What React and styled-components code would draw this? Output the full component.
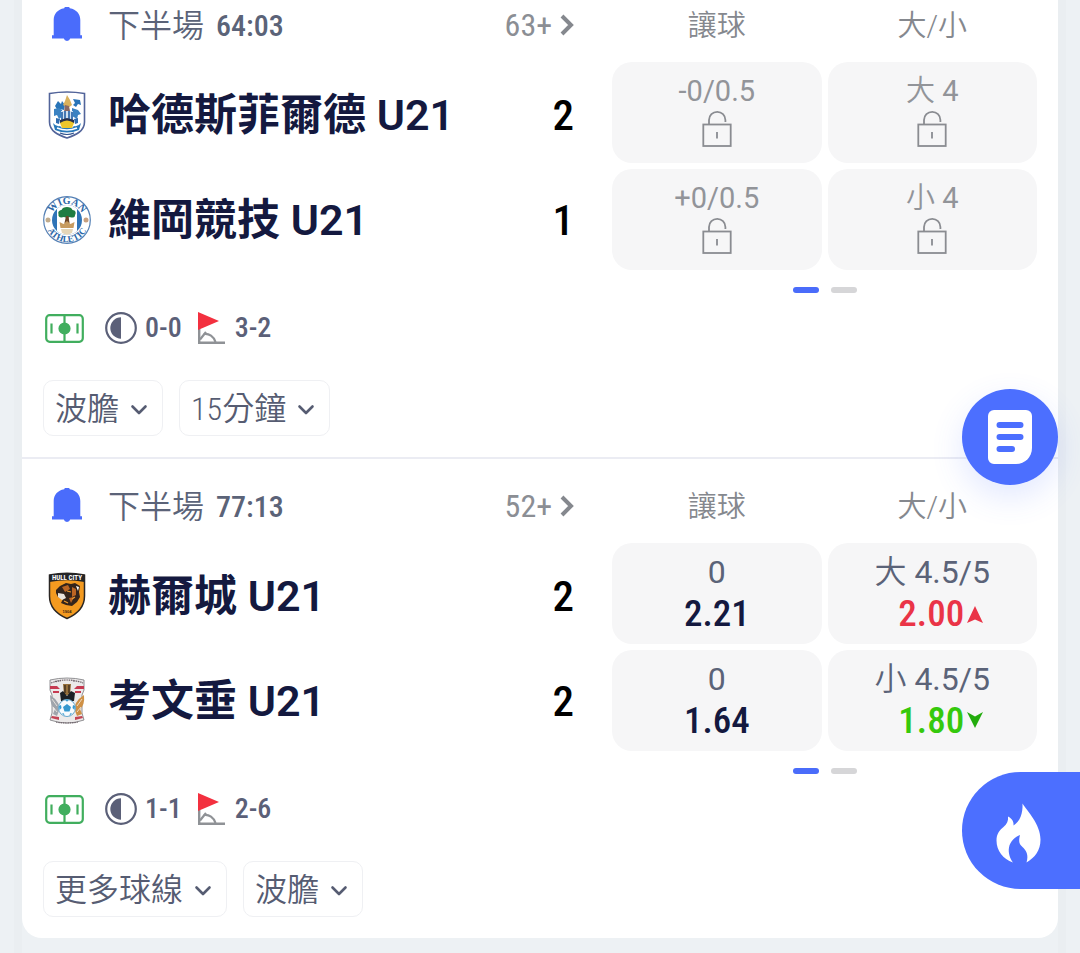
import React from "react";
import styled, { createGlobalStyle } from "styled-components";

const sans = `Roboto, "Noto Sans CJK TC", sans-serif`;
const narrow = `"Roboto Condensed", "Liberation Sans Narrow", Roboto, "Noto Sans CJK TC", sans-serif`;

const GlobalStyle = createGlobalStyle`
  *, *::before, *::after { box-sizing: border-box; }
  body { margin: 0; background: #edf1f4; font-family: ${sans}; color: #14193f; }
  button { font: inherit; color: inherit; border: 0; padding: 0; background: none; cursor: pointer; }
  svg { display: block; flex: none; }
`;

const Page = styled.main`
  padding: 0 14px;
`;

const Panel = styled.section`
  border: solid #eaeef1;
  border-width: 0 8px;
  padding-bottom: 16px;
`;

const Card = styled.div`
  background: #fff;
  border-radius: 0 0 20px 20px;
`;

const Match = styled.article`
  padding: 0 21px 21px;
  & + & { border-top: 2px solid #ebecf3; padding-top: 22px; }
`;

const Board = styled.div`
  display: grid;
  grid-template-columns: 5fr 4fr;
  column-gap: 38px;
`;

const HeadRow = styled.div`
  display: flex;
  align-items: center;
  height: 50px;
  margin-bottom: 12px;
  line-height: 40px;
`;

const IconCell = styled.span`
  display: flex;
  justify-content: center;
  width: 48px;
  margin-right: 17px;
`;

const BellButton = styled.button`
  display: flex;
  justify-content: center;
  width: 48px;
  margin-right: 17px;
`;

const Period = styled.span`
  padding-top: 2px;
  font-size: 32px;
  font-weight: 350;
  color: #5b6378;
`;

const Clock = styled.time`
  margin-left: 12px;
  padding-top: 2px;
  font: 500 30px/40px ${narrow};
  color: #5b6378;
`;

const MoreLink = styled.a`
  display: flex;
  align-items: center;
  gap: 8px;
  margin-left: auto;
  font: 400 32px/40px ${narrow};
  color: #8b8e94;
  text-decoration: none;
`;

const Teams = styled.div`
  display: grid;
  grid-auto-rows: 105px;
`;

const Team = styled.div`
  display: flex;
  align-items: center;
`;

const TeamName = styled.h2`
  margin: 0;
  font-size: 43px;
  line-height: 48px;
  font-weight: 600;
  white-space: nowrap;
`;

const Score = styled.strong`
  margin-left: auto;
  font: 500 43px/48px ${narrow};
  color: #000;
`;

const MarketHead = styled(HeadRow)`
  display: grid;
  grid-template-columns: 1fr 1fr;
  gap: 6px;
  padding-top: 2px;
  text-align: center;
  font-size: 29px;
  font-weight: 350;
  color: #85888e;
`;

const OddsGrid = styled.div`
  display: grid;
  grid-template-columns: 1fr 1fr;
  grid-auto-rows: 101px;
  gap: 6px;
`;

const OddsButton = styled.button`
  && { padding-top: 11px; background: #f6f6f7; }
  display: flex;
  flex-direction: column;
  align-items: center;
  justify-content: flex-start;
  border-radius: 20px;
`;

const Line = styled.span`
  font-size: ${(p) => (p.$locked ? "29px" : "32px")};
  line-height: 36px;
  font-weight: 400;
  color: ${(p) => (p.$locked ? "#929499" : "#5b6378")};
`;

const Side = styled.span`
  font-weight: 350;
`;

const priceColors = { up: "#ea3447", down: "#35c90c" };

const Price = styled.span`
  display: flex;
  align-items: center;
  gap: 2px;
  padding-left: ${(p) => (p.$trend ? "18px" : "0")};
  font: 500 37px/48px ${narrow};
  color: ${(p) => priceColors[p.$trend] || "#14193f"};
`;

const Pager = styled.div`
  display: flex;
  justify-content: center;
  gap: 12px;
  margin-top: 17px;
`;

const PagerDot = styled.button`
  && { background: ${(p) => (p.$active ? "#4a6cfa" : "#d6d6d8")}; }
  width: 26px;
  height: 6px;
  border-radius: 3px;
`;

const Stats = styled.div`
  display: flex;
  align-items: center;
  height: 36px;
  margin-top: 17px;
  padding-left: 2px;
`;

const Stat = styled.span`
  display: flex;
  align-items: center;
  gap: ${(p) => p.$gap}px;
  margin-left: ${(p) => p.$space}px;
  font: 500 28px/36px ${narrow};
  color: #5b6078;
`;

const Chips = styled.div`
  display: flex;
  gap: 16px;
  margin-top: 34px;
`;

const Chip = styled.button`
  && {
    border: 1px solid #eff0f3;
    padding: 2px 14px 0 11px;
    font: 350 32px/50px ${narrow};
    color: #565c72;
  }
  display: flex;
  align-items: center;
  gap: 11px;
  height: 56px;
  border-radius: 10px;
`;

const SlipButton = styled.button`
  position: fixed;
  right: 22px;
  top: 389px;
  display: grid;
  place-items: center;
  width: 96px;
  height: 96px;
  border-radius: 50%;
  && { background: #4c6fff; }
  box-shadow: 0 12px 32px rgba(76, 111, 255, 0.16);
`;

const HotButton = styled.button`
  position: fixed;
  right: 0;
  top: 772px;
  display: flex;
  align-items: center;
  width: 118px;
  height: 117px;
  && { padding: 4px 0 0 34px; background: #4c6fff; }
  border-radius: 59px 0 0 59px;
`;

const BellIcon = () => (
  <svg width="32" height="36" viewBox="0 0 32 36" fill="#4a6cfb" aria-hidden="true">
    <path d="M13.2 1.200a3 3 0 0 1 5.600 0C25.500 2.400 29.300 7 29.300 13v15.200H31v3.400H19.200a3.300 3.300 0 0 1-6.400 0H1v-3.400h1.700V13C2.700 7 6.500 2.400 13.200 1.200Z" />
  </svg>
);

const ChevronRight = () => (
  <svg width="14" height="22" viewBox="0 0 14 22" fill="none" stroke="#85888e" strokeWidth="4" aria-hidden="true">
    <path d="M2 2l9 9-9 9" />
  </svg>
);

const ChevronDown = () => (
  <svg width="18" height="12" viewBox="0 0 18 12" fill="none" stroke="#565c72" strokeWidth="2.600" strokeLinecap="round" strokeLinejoin="round" aria-hidden="true">
    <path d="M2.500 3.500L9 10l6.500-6.500" />
  </svg>
);

const LockIcon = () => (
  <svg width="30" height="38" viewBox="0 0 30 38" fill="none" stroke="#8a8c91" strokeWidth="1.800" role="img" aria-label="鎖定">
    <rect x="1.300" y="15.500" width="27.400" height="21.500" />
    <path d="M7 15.500V11a8.200 8.200 0 0 1 16.400 0v2" />
    <path d="M15 23v6.500" />
  </svg>
);

const TrendIcon = ({ trend }) => (
  <svg width="18" height="18" viewBox="0 0 18 18" aria-hidden="true">
    {trend === "up" ? (
      <path d="M9 1L17 18 9 14.500 1 18Z" fill="#ea3447" />
    ) : (
      <path d="M9 16L17 0 9 4.500 1 0Z" fill="#22ab0c" />
    )}
  </svg>
);

const PitchIcon = () => (
  <svg width="39" height="29" viewBox="0 0 39 29" fill="none" stroke="#41ae5e" strokeWidth="2.200" role="img" aria-label="球場">
    <rect x="1.200" y="1.200" width="36.600" height="26.600" rx="3.500" />
    <path d="M19.500 1v27M6.500 9.500v10M32.500 9.500v10" />
    <circle cx="19.500" cy="14.500" r="5" fill="#41ae5e" />
  </svg>
);

const HalfIcon = () => (
  <svg width="32" height="32" viewBox="0 0 32 32" role="img" aria-label="半場">
    <circle cx="16" cy="16" r="14.800" fill="none" stroke="#5b6078" strokeWidth="2.200" />
    <path d="M16 5.300a10.700 10.700 0 0 0 0 21.400Z" fill="#5b6078" />
  </svg>
);

const CornerIcon = () => (
  <svg width="27" height="32" viewBox="0 0 27 32" role="img" aria-label="角球">
    <path d="M1.200 17v13.700H27" fill="none" stroke="#8f9296" strokeWidth="2.400" />
    <path d="M2 27.500l6-7.500M5.500 22C11 21 16 24.500 17.500 30" fill="none" stroke="#8f9296" strokeWidth="2.200" />
    <path d="M0 0l21 9-21 9Z" fill="#f3303f" />
  </svg>
);

const SlipIcon = () => (
  <svg width="44" height="54" viewBox="0 0 44 54" aria-hidden="true">
    <path d="M6 0h32a6 6 0 0 1 6 6v32c0 9-7 16-16 16H6a6 6 0 0 1-6-6V6a6 6 0 0 1 6-6Z" fill="#fff" />
    <path d="M11.500 15h21M11.500 27h21M11.500 39h12.500" stroke="#4c6fff" strokeWidth="6" strokeLinecap="round" />
  </svg>
);

const FlameIcon = () => (
  <svg width="46" height="60" viewBox="0 0 46 60" aria-hidden="true">
    <path fill="#fff" d="M26.500 0.500C31 8 44.500 21 44.500 36.500c0 11-5.500 18-14 23 2.500-8-.5-12-4-15.500C23 41 22.500 38 24 32c-4.500 1.500-10 6.500-11 12.500C12 50 14 55.500 17 59.500 7 56 .5 47.500 .5 37.500.5 31 3.500 27 7.500 24c3.500-3 5-6 4.500-10.500 4 2 6 5 5.500 9 6.500-4 9.500-12 9-22Z" />
  </svg>
);

const HuddersfieldCrest = () => (
  <svg width="48" height="48" viewBox="0 0 48 48" role="img" aria-label="哈德斯菲爾德">
    <path d="M6.500 2.500Q24-.5 41.500 2.500V31C41.500 40 33 44 24 47 15 44 6.500 40 6.500 31Z" fill="#fff" stroke="#52649a" strokeWidth="1.600" />
    <path d="M12 15l3-5 3 3 1-3 3 4-1 5-4-1-2 2zM30 8l7 1 1 5-3-1-2 3-3-2 2-2z" fill="#2874b8" />
    <path d="M11 18l5-1 3 2 1 6-4 3-2-4-3 1zM29 17l6 2 3 4-3 1-1 4-5-3z" fill="#3a82c2" />
    <path d="M13 27l4 1-1 5-3-1zM31 28l4-1v5l-3 1z" fill="#2f6cb0" />
    <path d="M22 10l2-6 3 5 2 5-4 3-5-3z" fill="#d9b15c" />
    <path d="M22 14l4 1 1 5-6 1z" fill="#8a6963" />
    <path d="M18 20h12v11H18z" fill="#cfe0ef" />
    <path d="M19 21v10M22 20v11M26 20v11M29 21v10" stroke="#225fa6" strokeWidth="1.600" />
    <path d="M17 29l7-2 7 2v3H17z" fill="#28304b" />
    <path d="M17 32q7-5 14 0l-2 5H19z" fill="#edc62c" />
    <path d="M10 32q3 4 7 3l2 2h10l2-2q4 1 7-3l-2 7q-12 5-24 0z" fill="#2878b9" />
    <path d="M14 37q10 4 20 0" fill="none" stroke="#fff" strokeWidth="1.400" />
    <path d="M17 42q7 3 14 0" fill="none" stroke="#2c4f8b" strokeWidth="1.200" />
  </svg>
);

const WiganCrest = () => (
  <svg width="48" height="48" viewBox="0 0 48 48" role="img" aria-label="維岡競技">
    <defs>
      <path id="wigan-top" d="M8 24a16 16 0 0 1 32 0" />
      <path id="wigan-bottom" d="M2 24a22 22 0 0 0 44 0" />
      <clipPath id="wigan-disc"><circle cx="24" cy="24" r="15" /></clipPath>
    </defs>
    <circle cx="24" cy="24" r="23.300" fill="#fff" stroke="#5480b5" strokeWidth="1.200" />
    <g clipPath="url(#wigan-disc)">
      <path d="M8 8h32v32H8z" fill="#2f74b8" />
      <path d="M14 8h20v32H14z" fill="#fff" />
    </g>
    <path d="M15.500 18c-1-3 2-4 3-4 1-4 10-4 11 0 3 0 4 3 2.500 5 .5 3-4 3-5 2-2 1-4 1-6 0-4 1-6 0-5.500-3z" fill="#1f7d43" />
    <path d="M23 20h2.500l1 7h-5z" fill="#6d4527" />
    <path d="M16.500 26l4 2 3.500-3 3.500 3 4-2-1 6H17.500z" fill="#c79b60" />
    <path d="M18 33h12l-1 4-5 2-5-2z" fill="#e5d6b8" />
    <circle cx="5" cy="24" r="2.500" fill="#c0ab8c" />
    <circle cx="43" cy="24" r="2.500" fill="#c7a080" />
    <g fill="#2b66a8" fontFamily="Liberation Serif, serif" fontWeight="700" fontSize="10" textAnchor="middle">
      <text><textPath href="#wigan-top" startOffset="50%">WIGAN</textPath></text>
      <text fontSize="9"><textPath href="#wigan-bottom" startOffset="50%">ATHLETIC</textPath></text>
    </g>
  </svg>
);

const HullCrest = () => (
  <svg width="48" height="48" viewBox="0 0 48 48" role="img" aria-label="赫爾城">
    <path d="M6.500 3Q24-.5 41.500 3V24c0 11-7 18-17.500 22.500C13.500 42 6.500 35 6.500 24Z" fill="#f39a20" stroke="#2b2724" strokeWidth="1.500" />
    <path d="M6.500 3Q24-.5 41.500 3v7Q24 6.500 6.500 10Z" fill="#232528" />
    <text x="24" y="7.500" fill="#fff" fontFamily="Roboto Condensed, sans-serif" fontWeight="700" fontSize="7" textAnchor="middle">HULL CITY</text>
    <path d="M13 18l4-4 6-3 5 1 4-1 5 3-1 6 1 5-3 5-5 4-6-1-5-2 2-4-5-2-2-4z" fill="#33241b" />
    <path d="M19 15l6-2 2 4-5 3zM29 15l4 2v6l-4 2zM26 26l5-1-3 6z" fill="#ba6524" />
    <path d="M15 21l6 1 2 4-4 2-4-3z" fill="#e9e4dc" />
    <path d="M33 14l3 1-1 4z" fill="#fff" />
    <path d="M24 19l4 1M29 27l3-2M21 29l4 2" stroke="#ef9b2e" strokeWidth="1.200" />
    <text x="24" y="41" fill="#332517" fontFamily="Liberation Sans, sans-serif" fontWeight="700" fontSize="4" textAnchor="middle">1904</text>
  </svg>
);

const CoventryCrest = () => (
  <svg width="48" height="48" viewBox="0 0 48 48" role="img" aria-label="考文垂">
    <path d="M7 3Q24-1 41 3v10l-2 5v18l2 7Q24 49 7 43l2-7V18l-2-5Z" fill="#eceaea" stroke="#77777b" strokeWidth=".8" />
    <path d="M8 6q5-2 10-2M30 4q6 0 10 2M12 4.500q12-3 24 0M13 45q11 2 22 0" fill="none" stroke="#70646b" strokeWidth="1.200" strokeDasharray="1.500 .8" />
    <path d="M7 9h7l3 3H7zM41 9h-7l-3 3h10zM10 14h6v2h-6zM38 14h-6v2h6z" fill="#c63a51" />
    <path d="M20 7h8l-1 11h-6z" fill="#96703c" />
    <path d="M22 8v8M26 8v8" stroke="#33251c" strokeWidth="1.200" />
    <path d="M17 16l3-2 4 5 4-5 4 2-1 8H18z" fill="#1c2026" />
    <path d="M7 18q5 3 8 8l2 5-3 8-4-2 2-5q-5-4-5-14z" fill="#9fa4ab" />
    <path d="M41 18q-5 3-8 8l-2 5 3 8 5-2-2-5q5-4 4-14z" fill="#cf9146" />
    <path d="M9 22l5 7M10 30l4 5M39 22l-5 7M38 30l-4 5" stroke="#f4eee6" strokeWidth=".8" />
    <circle cx="24" cy="31" r="8.500" fill="#f7fbfe" stroke="#68a8cd" />
    <path d="M24 27l4 3-1.500 4.500h-5L20 30zM22 22.800h4l-2 2zM16 29l2-1 .5 3-2 2zM32 29l-2-1-.5 3 2 2zM19 36l2 .5.500 2.500zM29 36l-2 .5-.5 2.500z" fill="#3598cf" />
    <path d="M9 39l7 1v3l-8-2zM39 39l-7 1v3l8-2z" fill="#c34455" />
  </svg>
);

const matches = [
  {
    clock: "64:03",
    more: "63+",
    teams: [
      { name: "哈德斯菲爾德 U21", score: 2, Crest: HuddersfieldCrest },
      { name: "維岡競技 U21", score: 1, Crest: WiganCrest },
    ],
    odds: [{ line: "-0/0.5" }, { side: "大", line: "4" }, { line: "+0/0.5" }, { side: "小", line: "4" }],
    half: "0-0",
    corners: "3-2",
    chips: ["波膽", "15分鐘"],
  },
  {
    clock: "77:13",
    more: "52+",
    teams: [
      { name: "赫爾城 U21", score: 2, Crest: HullCrest },
      { name: "考文垂 U21", score: 2, Crest: CoventryCrest },
    ],
    odds: [
      { line: "0", price: "2.21" },
      { side: "大", line: "4.5/5", price: "2.00", trend: "up" },
      { line: "0", price: "1.64" },
      { side: "小", line: "4.5/5", price: "1.80", trend: "down" },
    ],
    half: "1-1",
    corners: "2-6",
    chips: ["更多球線", "波膽"],
  },
];

function Odds({ side, line, price, trend }) {
  return (
    <OddsButton type="button" disabled={!price}>
      <Line $locked={!price}>
        {side && <Side>{side} </Side>}
        {line}
      </Line>
      {price ? (
        <Price $trend={trend}>
          {price}
          {trend && <TrendIcon trend={trend} />}
        </Price>
      ) : (
        <LockIcon />
      )}
    </OddsButton>
  );
}

function MatchCard({ match }) {
  return (
    <Match>
      <Board>
        <div>
          <HeadRow>
            <BellButton type="button" aria-label="通知"><BellIcon /></BellButton>
            <Period>下半場</Period>
            <Clock>{match.clock}</Clock>
            <MoreLink href="#more">{match.more}<ChevronRight /></MoreLink>
          </HeadRow>
          <Teams>
            {match.teams.map(({ name, score, Crest }) => (
              <Team key={name}>
                <IconCell><Crest /></IconCell>
                <TeamName>{name}</TeamName>
                <Score>{score}</Score>
              </Team>
            ))}
          </Teams>
        </div>
        <div>
          <MarketHead><span>讓球</span><span>大/小</span></MarketHead>
          <OddsGrid>
            {match.odds.map((o, i) => <Odds key={i} {...o} />)}
          </OddsGrid>
          <Pager>
            <PagerDot type="button" $active aria-label="第 1 頁" />
            <PagerDot type="button" aria-label="第 2 頁" />
          </Pager>
        </div>
      </Board>
      <Stats>
        <PitchIcon />
        <Stat $gap={8} $space={21}><HalfIcon />{match.half}</Stat>
        <Stat $gap={10} $space={16}><CornerIcon />{match.corners}</Stat>
      </Stats>
      <Chips>
        {match.chips.map((c) => (
          <Chip key={c} type="button" aria-expanded="false">{c}<ChevronDown /></Chip>
        ))}
      </Chips>
    </Match>
  );
}

export default function App() {
  return (
    <>
      <GlobalStyle />
      <Page>
        <Panel>
          <Card>
            {matches.map((m) => <MatchCard key={m.clock} match={m} />)}
          </Card>
        </Panel>
      </Page>
      <SlipButton type="button" aria-label="注單"><SlipIcon /></SlipButton>
      <HotButton type="button" aria-label="熱門"><FlameIcon /></HotButton>
    </>
  );
}
